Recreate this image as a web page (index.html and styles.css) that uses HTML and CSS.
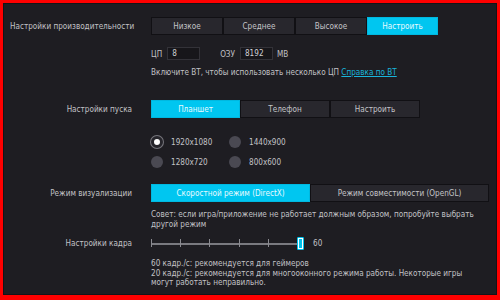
FILE: index.html
```html
<!DOCTYPE html>
<html lang="ru">
<head>
<meta charset="utf-8">
<link rel="stylesheet" href="styles.css">
</head>
<body>
<div class="frame">
  <div class="row r1">
    <div class="label l1">Настройки производительности</div>
    <div class="content">
      <div class="seg seg1">
        <div class="btn">Низкое</div>
        <div class="btn">Среднее</div>
        <div class="btn">Высокое</div>
        <div class="btn active">Настроить</div>
      </div>
      <div class="inputs">
        <span class="txt">ЦП</span>
        <span class="field">8</span>
        <span class="txt ozu">ОЗУ</span>
        <span class="field">8192</span>
        <span class="txt">MB</span>
      </div>
      <div class="help">Включите ВТ, чтобы использовать несколько ЦП <span class="link">Справка по ВТ</span></div>
    </div>
  </div>

  <div class="row r2">
    <div class="label">Настройки пуска</div>
    <div class="content">
      <div class="seg seg2">
        <div class="btn active">Планшет</div>
        <div class="btn">Телефон</div>
        <div class="btn">Настроить</div>
      </div>
      <div class="radios">
        <div class="radio"><span class="dot sel"></span>1920x1080</div>
        <div class="radio"><span class="dot"></span>1440x900</div>
        <div class="radio"><span class="dot"></span>1280x720</div>
        <div class="radio"><span class="dot"></span>800x600</div>
      </div>
    </div>
  </div>

  <div class="row r3">
    <div class="label">Режим визуализации</div>
    <div class="content">
      <div class="seg seg3">
        <div class="btn active b-dx">Скоростной режим (DirectX)</div>
        <div class="btn b-gl">Режим совместимости (OpenGL)</div>
      </div>
      <div class="tip">Совет: если игра/приложение не работает должным образом, попробуйте выбрать другой режим</div>
    </div>
  </div>

  <div class="row r4">
    <div class="label l4">Настройки кадра</div>
    <div class="content">
      <div class="slider-row">
        <div class="slider">
          <span class="tick"></span>
          <span class="tick"></span>
          <span class="tick"></span>
          <span class="tick"></span>
          <span class="tick"></span>
          <span class="thumb"></span>
        </div>
        <span class="val">60</span>
      </div>
      <div class="notes">60 кадр./с: рекомендуется для геймеров<br>20 кадр./с: рекомендуется для многооконного режима работы. Некоторые игры могут работать неправильно.</div>
    </div>
  </div>
</div>
</body>
</html>
```

FILE: styles.css
```css
* { box-sizing: border-box; }
html, body { margin: 0; padding: 0; background: #ff0000; }
body {
  width: 500px;
  height: 300px;
  overflow: hidden;
  font-family: "DejaVu Sans Condensed", "DejaVu Sans", sans-serif;
  font-size: 8.1px;
  color: #c2c2c6;
}
.frame {
  width: 500px;
  height: 300px;
  border-style: solid;
  border-color: #ff0000;
  border-width: 3px 3px 5px 3px;
  background: #1e1d22;
  box-shadow: inset 0 0 0 1px #141317;
  padding: 14px 0 0 7px;
}
.row {
  display: flex;
  column-gap: 19px;
}
.r2 { margin-top: 22px; }
.r3 { margin-top: 16px; }
.r4 { margin-top: 7px; }
.label {
  width: 122px;
  flex: none;
  text-align: right;
  white-space: nowrap;
  line-height: 18px;
}
.l1 { text-align: left; }
.l4 { line-height: 14px; }
.content { display: flex; flex-direction: column; flex: 1; }
.seg { display: flex; height: 18px; }
.btn {
  background: #28272d;
  border: 1px solid #111014;
  color: #c4c4c8;
  display: flex;
  align-items: center;
  justify-content: center;
  white-space: nowrap;
}
.btn.active {
  background: #00c6f0;
  border-color: #00b8e0;
  color: #e8faff;
}
.seg1 .btn { width: 72px; }
.seg1 .btn.active { width: 71px; }
.seg2 .btn { width: 90px; }
.seg2 .btn.active { width: 89px; }
.b-dx { width: 159px; }
.b-gl { width: 179px; }

.inputs {
  display: flex;
  align-items: center;
  margin-top: 12px;
  height: 13px;
}
.txt { margin-right: 5px; }
.ozu { margin-left: 16px; }
.field {
  width: 33px;
  height: 13px;
  background: #17161a;
  border: 1px solid #333238;
  padding-left: 4px;
  line-height: 11px;
  margin-right: 4px;
  color: #d0d0d4;
}
.help {
  margin-top: 6px;
  line-height: 12px;
}
.link {
  color: #19b4dc;
  text-decoration: underline;
}
.radios {
  display: grid;
  grid-template-columns: 78px 1fr;
  row-gap: 8px;
  margin-top: 18px;
}
.radio {
  display: flex;
  align-items: center;
  height: 12px;
}
.dot {
  width: 12px;
  height: 12px;
  border-radius: 50%;
  background: #4a4952;
  margin-right: 8px;
  flex: none;
}
.dot.sel {
  background: #ffffff;
  border: 3px solid #26252b;
  box-shadow: 0 0 0 1px #76757c;
}
.tip {
  margin-top: 7px;
  line-height: 10px;
  padding-right: 12px;
}
.slider-row {
  display: flex;
  align-items: center;
  height: 14px;
}
.slider {
  width: 153px;
  height: 13px;
  display: flex;
  justify-content: space-between;
  align-items: center;
  background: linear-gradient(#7a7a80, #7a7a80) 0 6px / 100% 2px no-repeat;
}
.tick {
  width: 1px;
  height: 8px;
  background: #8a8a90;
}
.thumb {
  width: 7px;
  height: 13px;
  background: #00c2ec;
  border: 1px solid #00c2ec;
  box-shadow: inset 0 0 0 1px #ffffff;
  border-radius: 1px;
}
.val { margin-left: 9px; }
.notes {
  margin-top: 9px;
  line-height: 9.7px;
  padding-right: 20px;
}
```
